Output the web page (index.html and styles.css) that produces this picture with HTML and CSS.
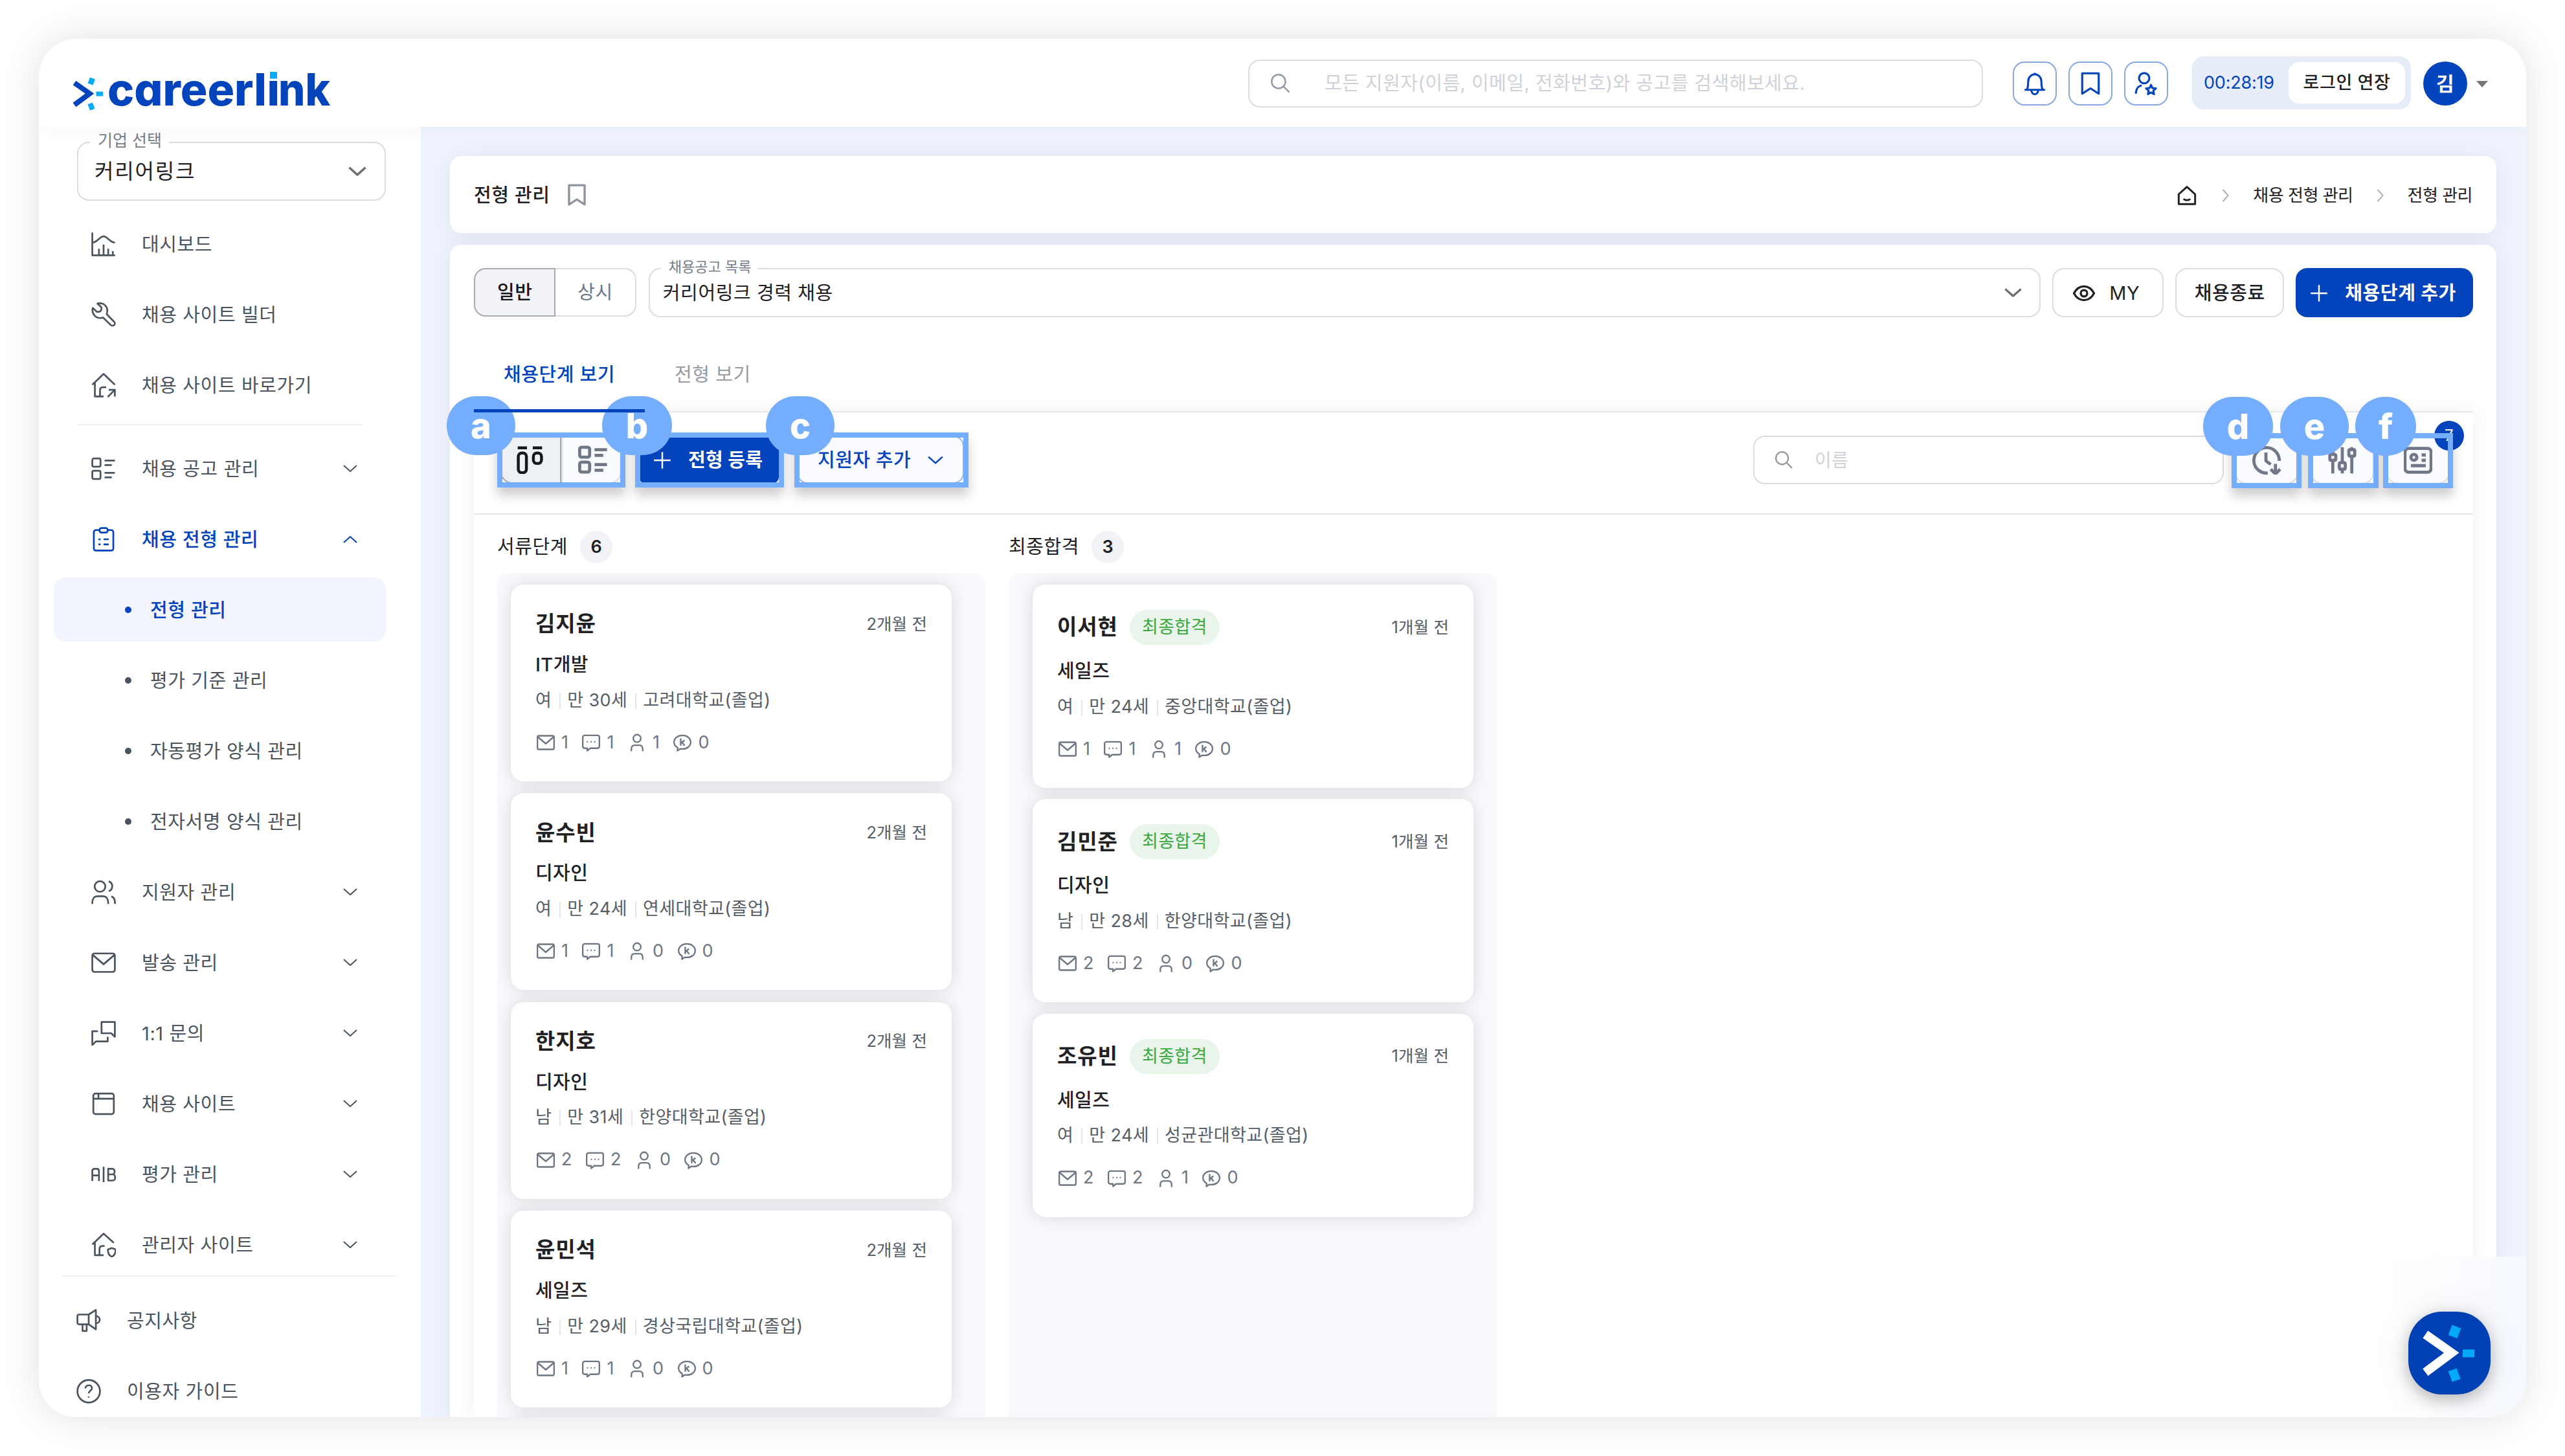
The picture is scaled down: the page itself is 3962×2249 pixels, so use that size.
FILE: index.html
```html
<!DOCTYPE html>
<html lang="ko">
<head>
<meta charset="utf-8">
<title>전형 관리</title>
<link rel="stylesheet" href="styles.css">
</head>
<body>
<svg class="defs" aria-hidden="true">
  <symbol id="chev" viewBox="0 0 24 24"><path d="M2 7l10 9L22 7"/></symbol>
  <symbol id="chevr" viewBox="0 0 24 24"><path d="M7 2l9 10-9 10"/></symbol>
  <symbol id="search" viewBox="0 0 24 24"><circle cx="9.5" cy="9.5" r="8.5"/><path d="M15.5 15.5L23 23"/></symbol>
  <symbol id="bell" viewBox="0 0 24 24"><path d="M1.5 18.5h21M4 18c1-2 1.200-4 1.200-8a6.800 7.500 0 0 1 13.600 0c0 4 .2 6 1.200 8M12 2.500V1M8.500 19a3.500 4 0 0 0 7 0"/></symbol>
  <symbol id="mark" viewBox="0 0 24 24"><path d="M3.500 1.500h17v21L12 17l-8.500 5.500z"/></symbol>
  <symbol id="userstar" viewBox="0 0 24 24"><circle cx="10" cy="6.500" r="5.300"/><path d="M1.500 22.500c0-5 2.500-8 6-8.500M17 13.500l1.500 3.200 3.500.4-2.600 2.300.7 3.500-3.100-1.700-3.100 1.700.7-3.500-2.600-2.300 3.500-.4z"/></symbol>
  <symbol id="home" viewBox="0 0 24 24"><path d="M2.500 10.500L12 2l9.500 8.500V22h-19zM8 16c2.500 1.800 5.500 1.800 8 0"/></symbol>
  <symbol id="eye" viewBox="0 0 24 24"><path d="M1 12c5.500-10 16.500-10 22 0-5.500 10-16.500 10-22 0z"/><circle cx="12" cy="12" r="3.500"/></symbol>
  <symbol id="plus" viewBox="0 0 24 24"><path d="M12 1v22M1 12h22"/></symbol>
  <symbol id="chart" viewBox="0 0 24 24"><path d="M1 .8V23h22.200M1 10.500C6 10.500 8 4.500 12 4.500s6 6 11 6M7.500 23v-6.500M12 23V12.500M16.500 23v-6.500M21 23v-4"/></symbol>
  <symbol id="wrench" viewBox="0 0 24 24"><path d="M1.500 5.500C0 11 4.500 17 11.500 14.800L19 22.200a2.300 2.300 0 0 0 3.300-3.300L15 11.500C17.500 4.500 12-.5 6 1.200l3.800 3.600c.6 3.200-1 4.800-4.200 4.500z"/></symbol>
  <symbol id="houselink" viewBox="0 0 24 24"><path d="M1 11.500L12 1l11 10.500M3.500 9.500V23H12M8.500 23v-6c0-2 1-3 3-3h3M16 23.500l7-7M17 16.500h6V23"/></symbol>
  <symbol id="houseshield" viewBox="0 0 24 24"><path d="M1 11.500L12 1l10 9M3.500 9.500V22H12M8 22v-6c0-2 1-3 3-3h2M20 15l3.800 1.400c0 4-1 6-3.800 7-2.800-1-3.800-3-3.800-7z"/></symbol>
  <symbol id="list" viewBox="0 0 24 24"><rect x="1" y="2" width="8" height="8" rx="1.500"/><rect x="1" y="14" width="8" height="8" rx="1.500"/><path d="M13 4h10M13 8.500h7M13 16h10M13 20.500h7"/></symbol>
  <symbol id="board" viewBox="0 0 24 24"><path d="M1.500 1.500h8M14.500 1.500h8"/><rect x="2" y="6" width="7" height="17" rx="3"/><rect x="15" y="6" width="7" height="9" rx="3"/></symbol>
  <symbol id="clip" viewBox="0 0 24 24"><path d="M8 3H4.500a2 2 0 0 0-2 2v16a2 2 0 0 0 2 2h15a2 2 0 0 0 2-2V5a2 2 0 0 0-2-2H16"/><rect x="8" y="1" width="8" height="4.500" rx="2"/><path d="M7 12h2M12 12h5M7 17h2M12 17h5"/></symbol>
  <symbol id="users" viewBox="0 0 24 24"><circle cx="8.500" cy="6.500" r="5.200"/><path d="M1 23.500v-1c0-4 2-6.500 5-6.500h5.500c3 0 5 2.500 5 6.500v1M17 1.500a5 5 0 0 1 0 9.500M19.500 16.200c2.500.6 3.700 3 3.700 7.300"/></symbol>
  <symbol id="mail" viewBox="0 0 24 24"><rect x="1" y="3" width="22" height="18" rx="2"/><path d="M1.500 4.500L12 13.500l10.500-9"/></symbol>
  <symbol id="talks" viewBox="0 0 24 24"><path d="M10 1h13v14.500L19.500 12H10zM6.500 10H1v13.500L4.500 20H16v-4.500"/></symbol>
  <symbol id="window" viewBox="0 0 24 24"><rect x="2" y="2" width="20" height="20" rx="2"/><path d="M2 7h20M7 2v5"/></symbol>
  <symbol id="ab" viewBox="0 0 24 24"><path d="M1 18.500V9c0-1.500.5-2.500 2-2.500h2.500c1.500 0 2 1 2 2.500v9.500M1 13h6.500M12 4.500v15M16.500 6.500h4c3 0 3 5.500 0 5.500h-4 4.500c3 0 3 6 0 6h-4.500z"/></symbol>
  <symbol id="horn" viewBox="0 0 24 24"><path d="M1 7.500a1.500 1.500 0 0 1 1.500-1.500H12l7-4.500v19L12 15.500H2.500A1.500 1.500 0 0 1 1 14zM12 6v9.500M19 7.500c5 0 5 7 0 7M6 15.500v6.500h4v-6.500"/></symbol>
  <symbol id="help" viewBox="0 0 24 24"><circle cx="12" cy="12" r="11"/><path d="M8.800 9.200c0-4 6.400-4 6.400-.3 0 2.600-3.200 2.600-3.200 5.200M12 17v1.200"/></symbol>
  <symbol id="chat" viewBox="0 0 24 24"><path d="M3.500 2.500h17A2.500 2.500 0 0 1 23 5v12a2.500 2.500 0 0 1-2.500 2.500H11L7 22.800v-3.300H3.500A2.500 2.500 0 0 1 1 17V5a2.500 2.500 0 0 1 2.500-2.500zM6.500 11h1.500M11.300 11h1.500M16 11h1.500"/></symbol>
  <symbol id="user" viewBox="0 0 24 24"><circle cx="12" cy="6.500" r="5"/><path d="M4.500 23.500v-3c0-3 1.500-5 4.500-5h6c3 0 4.500 2 4.500 5v3"/></symbol>
  <symbol id="kbubble" viewBox="0 0 24 24"><path d="M12 2.500c6 0 11 3.700 11 9s-5 9-11 9c-1 0-1.800 0-2.500-.3L5.500 22.800l.3-4C3 17 1 14.500 1 11.500c0-5.300 5-9 11-9zM9.800 6.500V16M14.800 9l-5 4.200M11.600 11.800l3.400 4.200"/></symbol>
  <symbol id="clock" viewBox="0 0 24 24"><path d="M13 22.700A10.700 10.700 0 1 1 22.700 12.500M11.500 5.500v7l4 3M19.500 15v8M15.500 19.500l4 4 4-4"/></symbol>
  <symbol id="sliders" viewBox="0 0 24 24"><path d="M4 1v6M4 12v11M12 1v13M12 19.500V23M20 8.500V23M20 1v2"/><rect x="1.500" y="7" width="5" height="5" rx="1"/><rect x="9.500" y="14" width="5" height="5.500" rx="1"/><rect x="17.500" y="3" width="5" height="5.500" rx="1"/></symbol>
  <symbol id="idcard" viewBox="0 0 24 24"><rect x="1" y="2" width="22" height="20" rx="3"/><circle cx="8.500" cy="9.500" r="2.500"/><path d="M15 7.500h3.500M15 12h3.500M6 16.500h12.500"/></symbol>
  <symbol id="spark" viewBox="0 0 48 54"><path class="spark-arrow" d="M3 10L26.500 26.500 3 44" /><path class="spark-dot" d="M27 1.500l8 3-3.500 9-8-3zM36.500 23.500h10.500v7H36.500zM23.500 43l7.500-2.500 3.500 9.500-7.500 2.500z"/></symbol>
</svg>

<div class="window">
  <header class="topbar">
    <div class="logo"><svg class="logo-mark"><use href="#spark"/></svg><svg class="logo-text" viewBox="0 0 342 60"><text y="51"><tspan x="-2" textLength="246" lengthAdjust="spacingAndGlyphs">careerl</tspan><tspan x="244.500">i</tspan><tspan x="262" textLength="80" lengthAdjust="spacingAndGlyphs">nk</tspan></text><path class="logo-cover" d="M246 -6h18v17.500h-18z"/><path class="logo-dot" d="M249 -1h11v10.500h-11z"/></svg></div>
    <div class="gsearch"><svg class="ic s30"><use href="#search"/></svg><span>모든 지원자(이름, 이메일, 전화번호)와 공고를 검색해보세요.</span></div>
    <div class="quick">
      <span class="qbtn"><svg class="ic"><use href="#bell"/></svg></span>
      <span class="qbtn"><svg class="ic"><use href="#mark"/></svg></span>
      <span class="qbtn"><svg class="ic"><use href="#userstar"/></svg></span>
    </div>
    <div class="session"><span class="time">00:28:19</span><span class="extend">로그인 연장</span></div>
    <div class="avatar">김</div>
    <div class="caret"></div>
  </header>

  <div class="body">
    <aside class="side">
      <div class="side-scroll">
        <div class="company"><span class="legend">기업 선택</span><b>커리어링크</b><svg class="ic"><use href="#chev"/></svg></div>
        <nav>
          <a class="row"><svg class="ic"><use href="#chart"/></svg><span>대시보드</span></a>
          <a class="row"><svg class="ic"><use href="#wrench"/></svg><span>채용 사이트 빌더</span></a>
          <a class="row"><svg class="ic"><use href="#houselink"/></svg><span>채용 사이트 바로가기</span></a>
          <hr>
          <a class="row"><svg class="ic"><use href="#list"/></svg><span>채용 공고 관리</span><svg class="ic arr"><use href="#chev"/></svg></a>
          <a class="row on"><svg class="ic"><use href="#clip"/></svg><span>채용 전형 관리</span><svg class="ic arr up"><use href="#chev"/></svg></a>
          <div class="subs">
            <a class="sub on"><i></i><span>전형 관리</span></a>
            <a class="sub"><i></i><span>평가 기준 관리</span></a>
            <a class="sub"><i></i><span>자동평가 양식 관리</span></a>
            <a class="sub"><i></i><span>전자서명 양식 관리</span></a>
          </div>
          <a class="row"><svg class="ic"><use href="#users"/></svg><span>지원자 관리</span><svg class="ic arr"><use href="#chev"/></svg></a>
          <a class="row"><svg class="ic"><use href="#mail"/></svg><span>발송 관리</span><svg class="ic arr"><use href="#chev"/></svg></a>
          <a class="row"><svg class="ic"><use href="#talks"/></svg><span>1:1 문의</span><svg class="ic arr"><use href="#chev"/></svg></a>
          <a class="row"><svg class="ic"><use href="#window"/></svg><span>채용 사이트</span><svg class="ic arr"><use href="#chev"/></svg></a>
          <a class="row"><svg class="ic"><use href="#ab"/></svg><span>평가 관리</span><svg class="ic arr"><use href="#chev"/></svg></a>
          <a class="row"><svg class="ic"><use href="#houseshield"/></svg><span>관리자 사이트</span><svg class="ic arr"><use href="#chev"/></svg></a>
        </nav>
      </div>
      <div class="side-foot">
        <a class="row"><svg class="ic"><use href="#horn"/></svg><span>공지사항</span></a>
        <a class="row"><svg class="ic"><use href="#help"/></svg><span>이용자 가이드</span></a>
      </div>
    </aside>

    <main class="main">
      <section class="titlebar">
        <h1>전형 관리</h1><svg class="ic"><use href="#mark"/></svg>
        <div class="crumbs"><svg class="ic home"><use href="#home"/></svg><svg class="ic sep"><use href="#chevr"/></svg><span>채용 전형 관리</span><svg class="ic sep"><use href="#chevr"/></svg><span>전형 관리</span></div>
      </section>

      <section class="panel">
        <div class="filters">
          <div class="seg"><span class="on">일반</span><span>상시</span></div>
          <div class="posting"><span class="legend">채용공고 목록</span><b>커리어링크 경력 채용</b><svg class="ic"><use href="#chev"/></svg></div>
          <div class="btn my"><svg class="ic"><use href="#eye"/></svg><span>MY</span></div>
          <div class="btn close">채용종료</div>
          <div class="btn primary"><svg class="ic"><use href="#plus"/></svg><span>채용단계 추가</span></div>
        </div>
        <div class="tabs"><span class="tab on">채용단계 보기</span><span class="tab">전형 보기</span></div>
        <div class="boardwrap">
          <div class="tools">
            <div class="view"><span class="on"><svg class="ic"><use href="#board"/></svg></span><span><svg class="ic"><use href="#list"/></svg></span></div>
            <div class="tbtn primary"><svg class="ic"><use href="#plus"/></svg><span>전형 등록</span></div>
            <div class="tbtn add"><span>지원자 추가</span><svg class="ic"><use href="#chev"/></svg></div>
            <div class="nsearch"><svg class="ic"><use href="#search"/></svg><span>이름</span></div>
            <div class="ibtn"><svg class="ic"><use href="#clock"/></svg></div>
            <div class="ibtn"><svg class="ic"><use href="#sliders"/></svg></div>
            <div class="ibtn"><svg class="ic"><use href="#idcard"/></svg><em>7</em></div>
          </div>
          <div class="columns">
            <div class="col">
              <h2>서류단계<i>6</i></h2>
              <div class="lane">
                <article class="card"><div class="top"><strong>김지윤</strong><time>2개월 전</time></div><p class="role">IT개발</p><p class="info"><span>여</span><span>만 30세</span><span>고려대학교(졸업)</span></p><div class="stats"><svg class="ic"><use href="#mail"/></svg><span>1</span><svg class="ic"><use href="#chat"/></svg><span>1</span><svg class="ic"><use href="#user"/></svg><span>1</span><svg class="ic"><use href="#kbubble"/></svg><span>0</span></div></article>
                <article class="card"><div class="top"><strong>윤수빈</strong><time>2개월 전</time></div><p class="role">디자인</p><p class="info"><span>여</span><span>만 24세</span><span>연세대학교(졸업)</span></p><div class="stats"><svg class="ic"><use href="#mail"/></svg><span>1</span><svg class="ic"><use href="#chat"/></svg><span>1</span><svg class="ic"><use href="#user"/></svg><span>0</span><svg class="ic"><use href="#kbubble"/></svg><span>0</span></div></article>
                <article class="card"><div class="top"><strong>한지호</strong><time>2개월 전</time></div><p class="role">디자인</p><p class="info"><span>남</span><span>만 31세</span><span>한양대학교(졸업)</span></p><div class="stats"><svg class="ic"><use href="#mail"/></svg><span>2</span><svg class="ic"><use href="#chat"/></svg><span>2</span><svg class="ic"><use href="#user"/></svg><span>0</span><svg class="ic"><use href="#kbubble"/></svg><span>0</span></div></article>
                <article class="card"><div class="top"><strong>윤민석</strong><time>2개월 전</time></div><p class="role">세일즈</p><p class="info"><span>남</span><span>만 29세</span><span>경상국립대학교(졸업)</span></p><div class="stats"><svg class="ic"><use href="#mail"/></svg><span>1</span><svg class="ic"><use href="#chat"/></svg><span>1</span><svg class="ic"><use href="#user"/></svg><span>0</span><svg class="ic"><use href="#kbubble"/></svg><span>0</span></div></article>
                <article class="card"></article>
              </div>
            </div>
            <div class="col final">
              <h2>최종합격<i>3</i></h2>
              <div class="lane">
                <article class="card"><div class="top"><strong>이서현</strong><mark>최종합격</mark><time>1개월 전</time></div><p class="role">세일즈</p><p class="info"><span>여</span><span>만 24세</span><span>중앙대학교(졸업)</span></p><div class="stats"><svg class="ic"><use href="#mail"/></svg><span>1</span><svg class="ic"><use href="#chat"/></svg><span>1</span><svg class="ic"><use href="#user"/></svg><span>1</span><svg class="ic"><use href="#kbubble"/></svg><span>0</span></div></article>
                <article class="card"><div class="top"><strong>김민준</strong><mark>최종합격</mark><time>1개월 전</time></div><p class="role">디자인</p><p class="info"><span>남</span><span>만 28세</span><span>한양대학교(졸업)</span></p><div class="stats"><svg class="ic"><use href="#mail"/></svg><span>2</span><svg class="ic"><use href="#chat"/></svg><span>2</span><svg class="ic"><use href="#user"/></svg><span>0</span><svg class="ic"><use href="#kbubble"/></svg><span>0</span></div></article>
                <article class="card"><div class="top"><strong>조유빈</strong><mark>최종합격</mark><time>1개월 전</time></div><p class="role">세일즈</p><p class="info"><span>여</span><span>만 24세</span><span>성균관대학교(졸업)</span></p><div class="stats"><svg class="ic"><use href="#mail"/></svg><span>2</span><svg class="ic"><use href="#chat"/></svg><span>2</span><svg class="ic"><use href="#user"/></svg><span>1</span><svg class="ic"><use href="#kbubble"/></svg><span>0</span></div></article>
              </div>
            </div>
          </div>
        </div>
      </section>
    </main>
  </div>
  <div class="helper"><div class="helper-btn"><svg><use href="#spark"/></svg></div></div>
</div>

<!-- guide callouts laid over the toolbar -->
<div class="frame fa"></div><div class="frame fb"></div><div class="frame fc"></div>
<div class="frame fd"></div><div class="frame fe"></div><div class="frame ff"></div>
<div class="tag ta">a</div><div class="tag tb">b</div><div class="tag tc">c</div>
<div class="tag td">d</div><div class="tag te">e</div><div class="tag tf">f</div>
</body>
</html>
```
FILE: styles.css
```css
* { box-sizing: border-box; }
html, body { margin: 0; }
body {
  position: relative;
  width: 3962px;
  height: 2249px;
  padding: 60px;
  overflow: hidden;
  background: #fff;
  color: #1f2124;
  font-family: Inter, "Noto Sans CJK KR", sans-serif;
  font-size: 29px;
  letter-spacing: .6px;
  line-height: 1.5;
  white-space: nowrap;
}
.defs { position: absolute; width: 0; height: 0; }
h1, h2, p { margin: 0; font-weight: 400; }
b, i, em { font-weight: inherit; font-style: normal; }
.ic { flex: none; fill: none; stroke: currentColor; stroke-width: 1.6; overflow: visible; stroke-linejoin: round; }

.window {
  position: relative;
  width: 3842px;
  height: 2129px;
  border-radius: 58px;
  background: #eff3fd;
  overflow: hidden;
  display: flex;
  flex-direction: column;
}
body::before {
  content: "";
  position: absolute;
  left: 60px; top: 60px;
  width: 3842px; height: 2129px;
  border-radius: 58px;
  box-shadow: 0 0 60px rgba(0, 0, 0, .12);
}

/* top bar */
.topbar {
  position: relative;
  z-index: 2;
  flex: none;
  height: 136px;
  padding-left: 52px;
  display: flex;
  align-items: flex-start;
  background: #fff;
  box-shadow: 0 2px 24px rgba(0, 0, 0, .04);
}
.logo { display: flex; width: 1816px; padding-top: 52px; }
.logo-mark { width: 48px; height: 54px; margin-top: 6px; }
.spark-arrow { fill: none; stroke: var(--arrow, #0343bb); stroke-width: 8; }
.spark-dot { fill: #04a9f8; }
.logo-text { width: 342px; height: 60px; margin-left: 8px; overflow: visible; }
.logo-text text { font-family: Inter, sans-serif; font-weight: 800; font-size: 69px; font-feature-settings: "cv11" 1; fill: #0343bb; letter-spacing: 0; }
.logo-cover { fill: #fff; }
.logo-dot { fill: #04a9f8; }
.gsearch {
  width: 1135px; height: 74px; margin-top: 32px;
  display: flex; align-items: center;
  border: 2px solid #d9dce1; border-radius: 18px;
  color: #cfd2d8; font-size: 29px; letter-spacing: .45px;
}
.gsearch .ic { width: 30px; height: 30px; margin: 0 53px 0 33px; color: #9297a0; stroke-width: 1.9; }
.quick { display: flex; gap: 18px; margin: 35px 0 0 46px; }
.qbtn { width: 68px; height: 68px; border: 2px solid #86a8e4; border-radius: 18px; display: flex; align-items: center; justify-content: center; color: #0343bb; }
.qbtn .ic { width: 36px; height: 38px; stroke-width: 2.100; }
.session { width: 338px; height: 82px; margin: 27px 0 0 37px; padding: 0 9px 0 18px; display: flex; align-items: center; justify-content: space-between; background: #e6ecf8; border-radius: 18px; }
.time { color: #0343bb; font-size: 27px; letter-spacing: -.2px; }
.extend { width: 180px; height: 64px; border-radius: 16px; background: #fff; display: flex; align-items: center; justify-content: center; font-size: 27px; font-weight: 500; letter-spacing: .6px; }
.avatar { width: 68px; height: 68px; margin: 35px 0 0 19px; border-radius: 50%; background: #0343bb; color: #fff; display: flex; align-items: center; justify-content: center; font-size: 30px; font-weight: 600; }
.caret { margin: 65px 0 0 14px; border: 9px solid transparent; border-top: 10px solid #767676; border-bottom: 0; }

.body { flex: 1; min-height: 0; display: flex; }

/* side menu */
.side { width: 590px; background: #fff; display: flex; flex-direction: column; color: #4b545e; flex: none; }
.side-scroll { height: 1774px; overflow: hidden; padding: 23px 0 0 59px; flex: none; }
.company, .posting { position: relative; display: flex; align-items: center; justify-content: space-between; border: 2px solid #d9dce1; border-radius: 18px; color: #1f2124; }
.company { width: 477px; height: 91px; padding: 0 27px 0 25px; margin-bottom: 12px; font-size: 32px; letter-spacing: 1.8px; }
.company .ic { width: 30px; height: 30px; stroke-width: 2.800; color: #6e6e6e; }
.legend { position: absolute; top: -20px; background: #fff; color: #757d8a; line-height: 32px; }
.company .legend { left: 18px; padding: 0 11px 0 12px; font-size: 25px; letter-spacing: 0; }
.row { display: flex; align-items: center; height: 109px; padding: 0 55px 0 22px; font-size: 29px; }
.row > span, .sub > span { padding-top: 3px; }
.row > .ic { width: 38px; height: 38px; margin-right: 40px; stroke-width: 1.700; }
.row .arr { width: 24px; height: 24px; margin: 0 42px 0 auto; stroke-width: 2; }
.row.on, .sub.on { color: #0343bb; font-weight: 500; }
.up { transform: rotate(180deg); }
nav hr { width: 440px; height: 2px; margin: 6px 0 12px; border: 0; background: #eff0f2; }
.subs { padding: 5px 0 5px; margin-left: -36px; }
.sub { display: flex; align-items: center; height: 99px; margin-bottom: 10px; width: 513px; padding-left: 110px; border-radius: 18px; }
.sub:last-child { margin-bottom: 0; }
.sub.on { background: #f2f5fd; }
.sub i { width: 10px; height: 10px; border-radius: 50%; background: currentColor; margin-right: 29px; }
.side-foot { margin: 0 36px; border-top: 2px solid #f1f2f4; padding-top: 13px; }
.side-foot .row { padding-left: 22px; }
.side-foot .row > .ic { margin-right: 40px; }

/* main area */
.main { flex: 1; padding: 45px 46px 0 45px; display: flex; flex-direction: column; gap: 18px; min-width: 0; }
.titlebar, .panel { background: #fff; border-radius: 18px; box-shadow: 0 2px 36px rgba(40, 45, 80, .08); }
.titlebar { flex: none; height: 119px; padding: 2px 37px 0; display: flex; align-items: center; }
.titlebar h1 { font-size: 29px; font-weight: 500; letter-spacing: .6px; }
.titlebar > .ic { width: 36px; height: 34px; margin-left: 24px; margin-top: -2px; color: #8e949e; stroke-width: 2.400; }
.crumbs { margin-left: auto; display: flex; align-items: center; font-size: 26px; letter-spacing: -.5px; }
.crumbs .home { width: 32px; height: 32px; stroke-width: 2.200; }
.crumbs .sep { width: 22px; height: 22px; margin: 0 31px; color: #9fa4ad; stroke-width: 1.900; }
.crumbs .home + .sep { margin-left: 33px; }

.panel { flex: 1; min-height: 0; border-radius: 18px 18px 0 0; padding: 36px 36px 0 37px; display: flex; flex-direction: column; }
.filters { display: flex; height: 76px; flex: none; }
.seg { display: flex; width: 251px; height: 75px; }
.seg span { flex: 1; display: flex; align-items: center; justify-content: center; border: 2px solid #d9dce1; border-left: 0; border-radius: 0 18px 18px 0; color: #6e7683; }
.seg .on { border: 2px solid #a7aaae; border-radius: 18px 0 0 18px; background: #f2f3f6; color: #15171a; font-weight: 500; }
.posting { width: 2152px; margin-left: 19px; padding: 1px 26px 0 20px; letter-spacing: .6px; }
.posting .legend { left: 17px; padding: 0 11px 0 12px; font-size: 22px; letter-spacing: 0; }
.posting .ic { width: 29px; height: 29px; stroke-width: 2.700; color: #6e6e6e; }
.btn { display: flex; align-items: center; justify-content: center; margin-left: 18px; border: 2px solid #d9dce1; border-radius: 18px; font-weight: 500; padding-top: 1px; }
.my { width: 172px; font-weight: 400; padding-right: 5px; }
.my .ic { width: 34px; height: 34px; margin-right: 22px; stroke-width: 2.300; }
.close { width: 168px; }
.primary { background: #0343bb; border-color: #0343bb; color: #fff; font-weight: 600; }
.btn.primary { width: 274px; padding-right: 4px; }
.btn.primary .ic { width: 28px; height: 28px; margin-right: 26px; stroke-width: 2.100; }
.tabs { flex: none; display: flex; height: 147px; align-items: flex-end; }
.tab { height: 118px; padding: 38px 46px 0; color: #969ba4; }
.tab.on { color: #0343bb; font-weight: 500; border-bottom: 5px solid #0343bb; position: relative; z-index: 1; letter-spacing: .6px; }

.boardwrap { flex: 1; min-height: 0; border-top: 2px solid #e6e8ec; margin-top: -2px; box-shadow: 0 0 30px rgba(0, 0, 0, .06); }
.tools { height: 158px; border-bottom: 2px solid #e4e6e9; padding: 36px 36px 0 41px; display: flex; }
.view { width: 187px; height: 74px; display: flex; }
.view span { flex: 1; display: flex; align-items: center; justify-content: center; border: 2px solid #d9dce1; border-radius: 0 18px 18px 0; background: #fafbff; color: #6f7788; }
.view .on { border-color: #a7aaae; border-radius: 18px 0 0 18px; background: #edf0f5; color: #17191c; }
.view .ic { width: 43px; height: 43px; stroke-width: 2.500; margin-right: 2px; }
.view span + span .ic { width: 47px; height: 46px; margin: 0 0 0 6px; }
.tbtn { display: flex; align-items: center; height: 74px; border-radius: 10px; padding-top: 1px; }
.tbtn.primary { width: 216px; margin-left: 27px; padding-left: 22px; font-weight: 600; letter-spacing: .2px; }
.tbtn.primary .ic { width: 28px; height: 28px; margin-right: 26px; stroke-width: 2.100; }
.tbtn.add { width: 258px; margin-left: 28px; padding-left: 30px; border: 2px solid #9fb6e4; border-radius: 16px; background: #fafbff; color: #0343bb; font-weight: 500; letter-spacing: .5px; }
.tbtn.add .ic { width: 26px; height: 26px; margin-left: 25px; stroke-width: 2.300; }
.nsearch { width: 727px; height: 75px; margin-left: auto; border: 2px solid #d9dce1; border-radius: 18px; display: flex; align-items: center; color: #cfd2d8; font-size: 28px; padding-left: 32px; }
.nsearch .ic { width: 27px; height: 27px; margin-right: 34px; color: #9297a0; stroke-width: 2; }
.ibtn { position: relative; width: 98px; height: 75px; margin-left: 19px; border: 2px solid #d9dce1; border-radius: 18px; background: #fafbff; color: #6f7788; display: flex; align-items: center; justify-content: center; }
.ibtn .ic { width: 44px; height: 44px; stroke-width: 2.600; }
.ibtn em { position: absolute; right: -24px; top: -25px; width: 46px; height: 46px; border-radius: 50%; background: #0343bb; color: #fff; font-size: 24px; line-height: 46px; text-align: center; }
.ibtn:nth-last-child(3) { margin-left: 17px; }

/* kanban */
.columns { display: flex; gap: 36px; padding: 25px 0 0 36px; }
.col { width: 754px; flex: none; }
.col h2 { display: flex; align-items: center; height: 50px; font-size: 29px; letter-spacing: .6px; }
.col h2 i { width: 50px; height: 50px; margin-left: 19px; border-radius: 50%; background: #f2f3f6; display: flex; align-items: center; justify-content: center; font-size: 27px; font-weight: 600; letter-spacing: 0; }
.lane { height: 1500px; margin-top: 15px; padding: 18px 0 0 21px; border-radius: 18px; background: #f8f9fc; }
.final .lane { padding-left: 37px; }
.card { width: 681px; height: 304px; margin-bottom: 18.300px; padding: 39px 38px 0; border-radius: 20px; background: #fff; box-shadow: 0 0 26px rgba(0, 0, 0, .13); }
.final .card { height: 314px; margin-bottom: 17.300px; }
.top { display: flex; align-items: center; height: 44px; }
.final .top { height: 54px; }
.top strong { font-size: 33px; font-weight: 700; letter-spacing: .9px; }
.top mark { margin-left: 18px; height: 54px; width: 139px; line-height: 54px; text-align: center; border-radius: 27px; background: #e9f5ea; color: #38a83e; font-size: 27px; letter-spacing: .3px; }
.top time { margin-left: auto; color: #565e68; font-size: 25.500px; letter-spacing: .1px; }
.role { margin-top: 18px; height: 46px; line-height: 46px; font-weight: 500; letter-spacing: .4px; }
.info { display: flex; align-items: center; margin-top: 9px; height: 46px; color: #565e68; font-size: 27px; letter-spacing: .4px; }
.info span + span { margin-left: 12px; padding-left: 12px; background: linear-gradient(#e3e5ea, #e3e5ea) 0 55% / 2px 24px no-repeat; }
.stats { display: flex; align-items: center; height: 40px; margin-top: 22px; color: #6e7683; font-size: 27px; letter-spacing: 0; }
.stats .ic { width: 28px; height: 28px; margin: 0 10px 0 2px; stroke-width: 2; }
.stats span { margin-right: 19.500px; }

/* chat launcher */
.helper { position: absolute; z-index: 3; right: 0; bottom: 0; width: 300px; height: 248px; background: linear-gradient(90deg, #fff 20%, #fcfdff 60%, #f5f8ff); overflow: hidden; }
.helper-btn { width: 127px; height: 128px; margin: 85px 0 0 118px; border-radius: 52px; background: #0040b5; box-shadow: 0 8px 24px rgba(0, 0, 0, .25), 0 0 60px rgba(0, 0, 0, .08); display: flex; align-items: center; justify-content: center; }
.helper-btn svg { --arrow: #fff; width: 83px; height: 93px; margin-left: -2px; }

/* callouts */
.frame { position: absolute; height: 85px; border: 8px solid #75adff; top: 668px; box-shadow: 0 12px 16px rgba(0, 0, 0, .2), inset 0 0 2px rgba(0, 0, 0, .05); }
.fa { left: 768px; width: 198px; }
.fb { left: 981px; width: 230px; }
.fc { left: 1227px; width: 269px; }
.fd { left: 3447px; width: 108px; top: 669px; }
.fe { left: 3565px; width: 109px; top: 669px; }
.ff { left: 3681px; width: 108px; top: 669px; }
.tag { position: absolute; top: 612px; height: 91px; width: 106px; border-radius: 46px; background: #75adff; color: #fff; font-size: 54px; font-weight: 800; line-height: 92px; text-align: center; letter-spacing: 0; }
.ta { left: 690px; }
.tb { left: 930px; width: 108px; }
.tc { left: 1183px; }
.td { left: 3403px; width: 108px; top: 613px; }
.te { left: 3522px; top: 613px; }
.tf { left: 3638px; width: 94px; top: 613px; }
```
